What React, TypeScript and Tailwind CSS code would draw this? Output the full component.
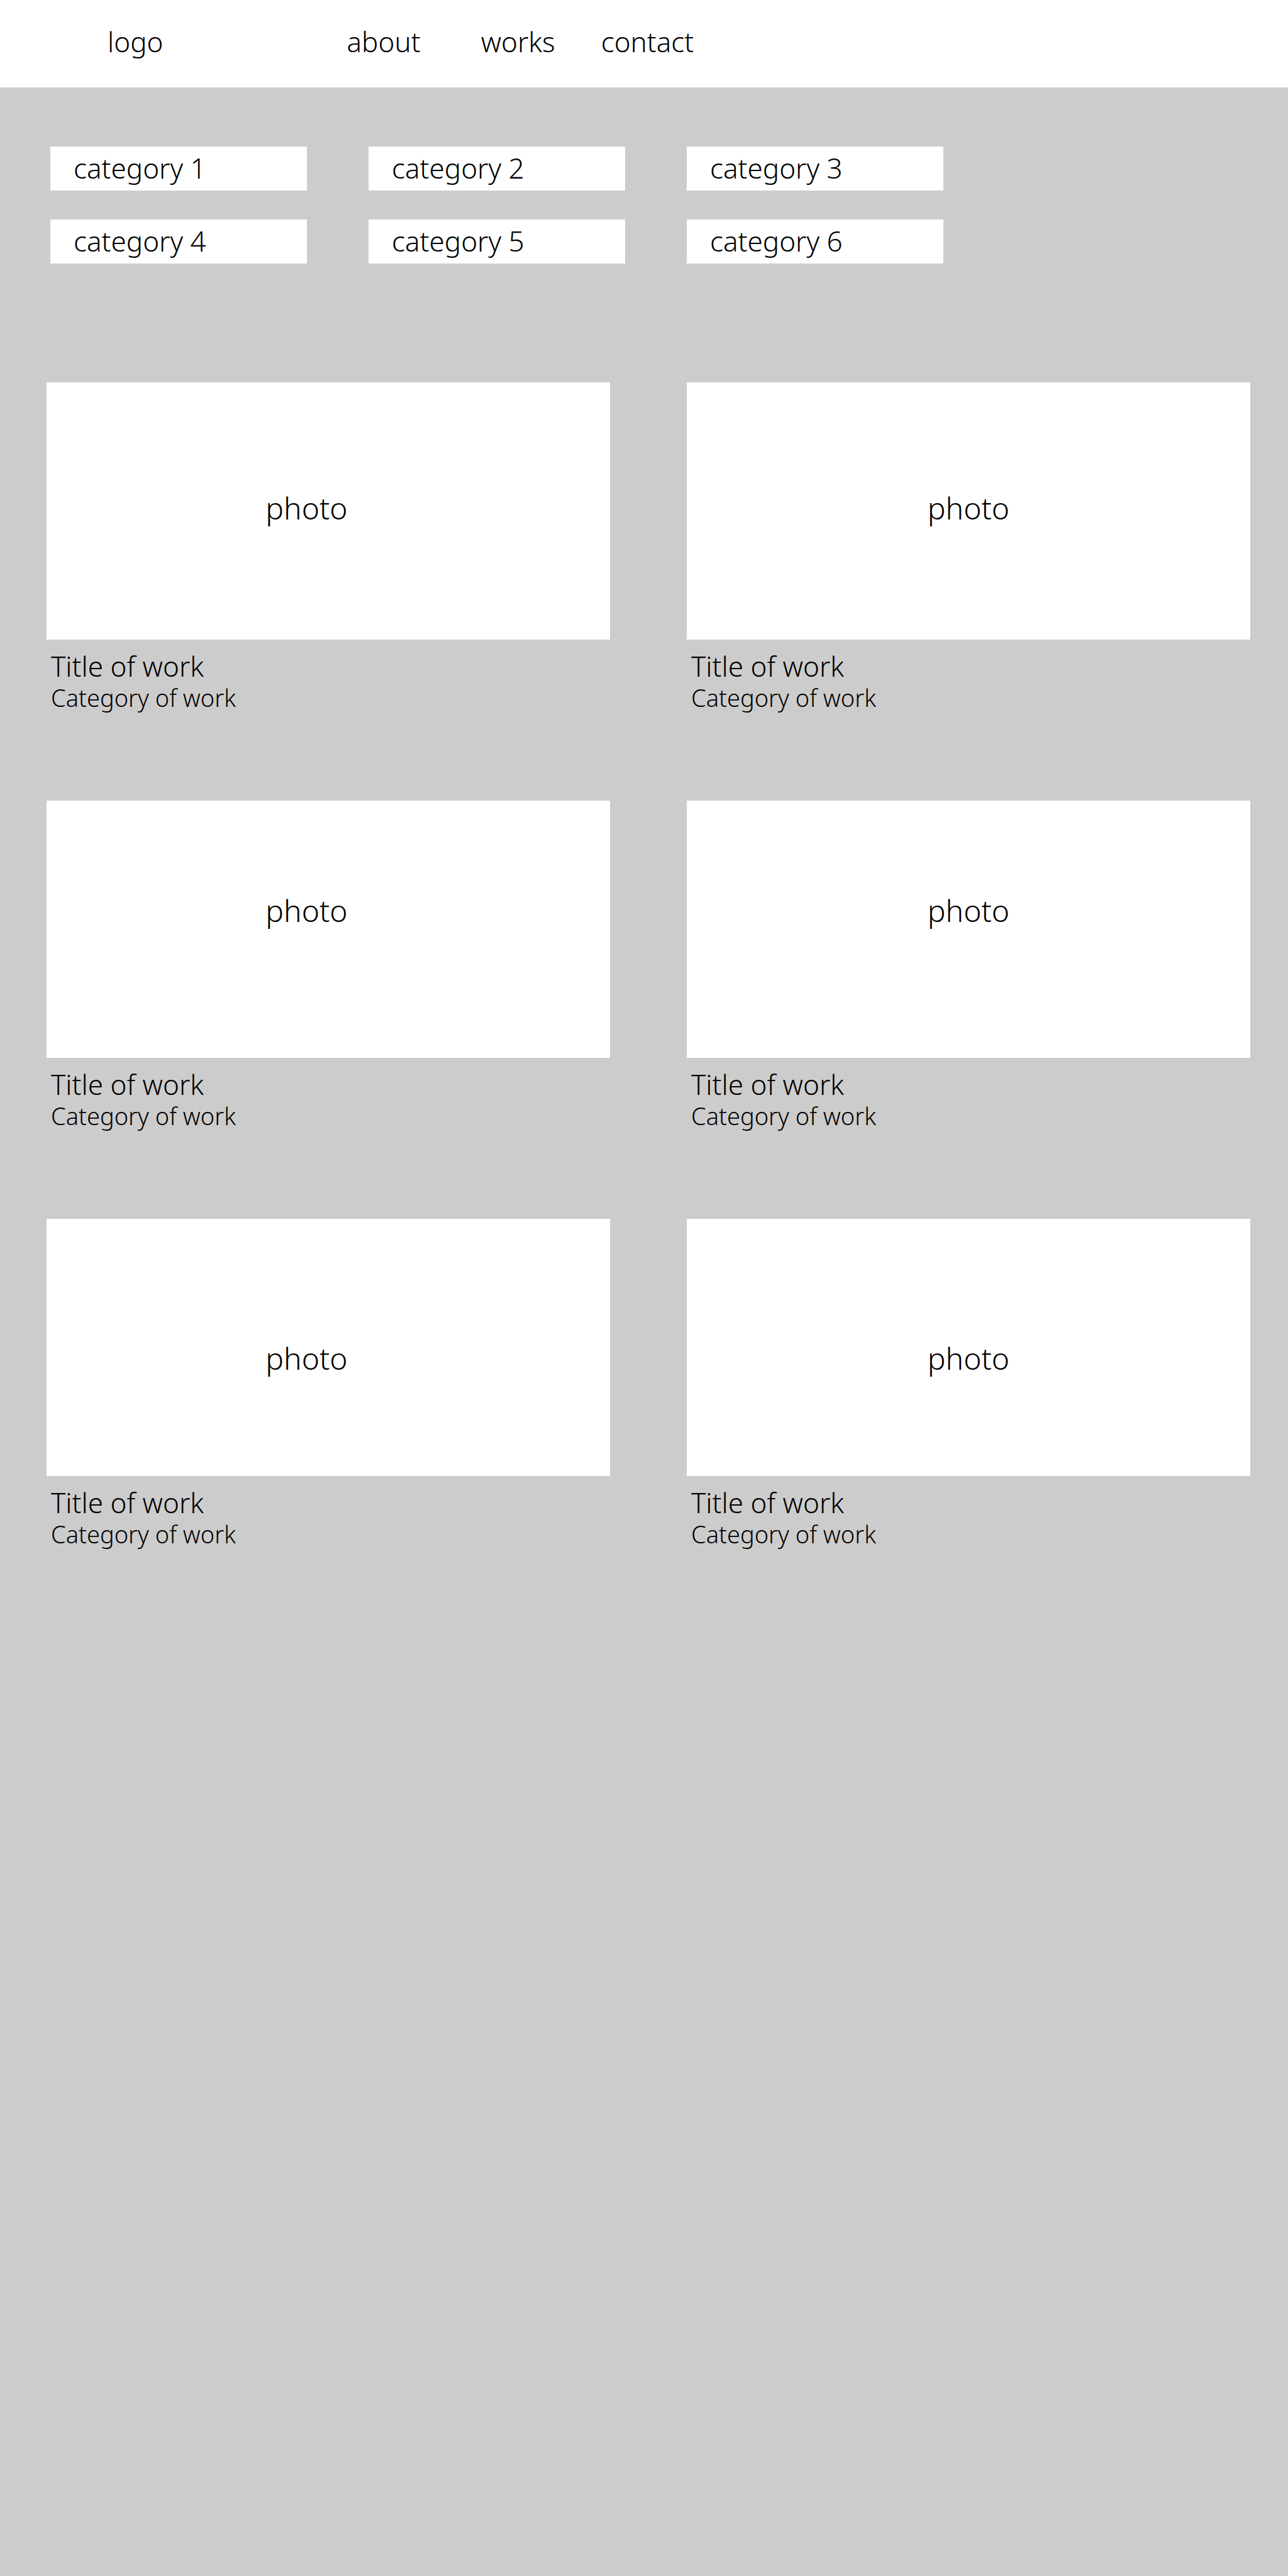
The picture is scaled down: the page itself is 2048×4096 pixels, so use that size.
const navLinks = [
  { label: "about", href: "#about", spacing: "mr-[96px]" },
  { label: "works", href: "#works", spacing: "mr-[73px]" },
  { label: "contact", href: "#contact", spacing: "" },
];

const categories = [
  "category 1",
  "category 2",
  "category 3",
  "category 4",
  "category 5",
  "category 6",
];

type Work = { id: number; title: string; category: string; photoPadding: string };

const works: Work[] = [
  { id: 1, title: "Title of work", category: "Category of work", photoPadding: "pr-[69px] pb-[10px]" },
  { id: 2, title: "Title of work", category: "Category of work", photoPadding: "pb-[10px]" },
  { id: 3, title: "Title of work", category: "Category of work", photoPadding: "pr-[69px] pb-[60px]" },
  { id: 4, title: "Title of work", category: "Category of work", photoPadding: "pb-[60px]" },
  { id: 5, title: "Title of work", category: "Category of work", photoPadding: "pr-[69px] pt-[35px]" },
  { id: 6, title: "Title of work", category: "Category of work", photoPadding: "pt-[35px]" },
];

function Header() {
  return (
    <header className="flex h-[139px] items-center bg-white pb-[8px] pl-[171px] text-[44px] leading-[60px]">
      <a href="#home" className="mr-[292px]">
        logo
      </a>
      <nav aria-label="Main" className="flex">
        {navLinks.map((link) => (
          <a key={link.label} href={link.href} className={link.spacing}>
            {link.label}
          </a>
        ))}
      </nav>
    </header>
  );
}

function CategoryFilter() {
  return (
    <section
      aria-label="Categories"
      className="grid grid-cols-[repeat(3,minmax(0,408px))] gap-x-[98px] gap-y-[46px] pl-[80px] pr-[60px]"
    >
      {categories.map((name) => (
        <button
          key={name}
          type="button"
          className="flex h-[70px] cursor-pointer items-center bg-white pb-[2px] pl-[37px] text-left text-[44px] leading-[60px]"
        >
          {name}
        </button>
      ))}
    </section>
  );
}

function WorkCard({ work }: { work: Work }) {
  return (
    <article>
      <div
        className={`flex h-[409px] items-center justify-center bg-white text-[48px] leading-[60px] ${work.photoPadding}`}
      >
        photo
      </div>
      <div className="pl-[7px] pt-[18px]">
        <h2 className="text-[44px] leading-[48px]">{work.title}</h2>
        <p className="text-[38px] leading-[52px]">{work.category}</p>
      </div>
    </article>
  );
}

export default function App() {
  return (
    <div className="min-h-screen bg-[#cccccc] font-['Noto_Sans',sans-serif] font-light text-black">
      <Header />
      <main className="pt-[94px]">
        <CategoryFilter />
        <section
          aria-label="Works"
          className="mt-[189px] grid grid-cols-2 gap-x-[122px] gap-y-[138px] pl-[74px] pr-[60px]"
        >
          {works.map((work) => (
            <WorkCard key={work.id} work={work} />
          ))}
        </section>
      </main>
    </div>
  );
}
